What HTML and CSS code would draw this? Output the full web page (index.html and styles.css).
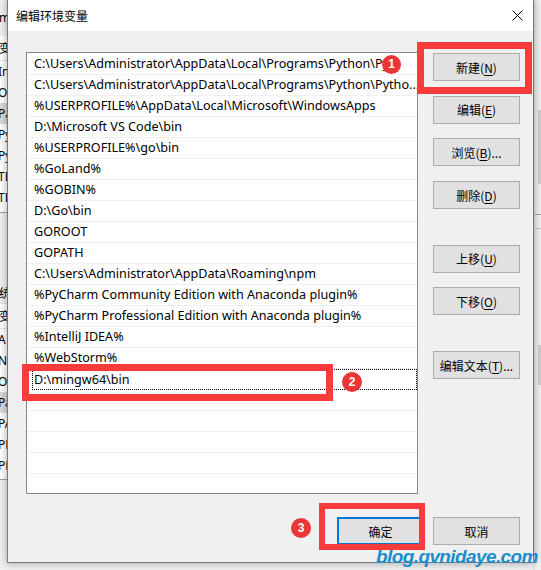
FILE: index.html
```html
<!DOCTYPE html>
<html lang="zh-CN">
<head>
<meta charset="utf-8">
<title>编辑环境变量</title>
<link rel="stylesheet" href="styles.css">
</head>
<body>
<div class="desktop">
  <div class="backwin">
    <div class="bw-title">m</div>
    <div class="bw-head">变</div>
    <div class="bw-list">
      <div class="bw-row">In</div>
      <div class="bw-row">On</div>
      <div class="bw-row sel">Pa</div>
      <div class="bw-row">Py</div>
      <div class="bw-row">Py</div>
      <div class="bw-row">TE</div>
      <div class="bw-row">TM</div>
    </div>
    <div class="bw-gap"></div>
    <div class="bw-group">统</div>
    <div class="bw-head2">变</div>
    <div class="bw-list2">
      <div class="bw-row">A</div>
      <div class="bw-row">NU</div>
      <div class="bw-row">OS</div>
      <div class="bw-row sel">Pa</div>
      <div class="bw-row">PA</div>
      <div class="bw-row">PR</div>
      <div class="bw-row">PR</div>
    </div>
  </div>

  <div class="backright">
    <div class="br-thumb"></div>
    <div class="br-line l1"></div>
    <div class="br-line l2"></div>
    <div class="br-thumb t2"></div>
  </div>

  <div class="dialog">
    <div class="titlebar">
      <span class="title">编辑环境变量</span>
      <svg class="close" width="11" height="11" viewBox="0 0 11 11"><path d="M0.5 0.5 L10.5 10.5 M10.5 0.5 L0.5 10.5" stroke="#000" stroke-width="1" fill="none"/></svg>
    </div>
    <div class="body">
      <div class="main">
        <div class="list">
          <div class="row">C:\Users\Administrator\AppData\Local\Programs\Python\Py...</div>
          <div class="row">C:\Users\Administrator\AppData\Local\Programs\Python\Pytho...</div>
          <div class="row">%USERPROFILE%\AppData\Local\Microsoft\WindowsApps</div>
          <div class="row">D:\Microsoft VS Code\bin</div>
          <div class="row">%USERPROFILE%\go\bin</div>
          <div class="row">%GoLand%</div>
          <div class="row">%GOBIN%</div>
          <div class="row">D:\Go\bin</div>
          <div class="row">GOROOT</div>
          <div class="row">GOPATH</div>
          <div class="row">C:\Users\Administrator\AppData\Roaming\npm</div>
          <div class="row">%PyCharm Community Edition with Anaconda plugin%</div>
          <div class="row">%PyCharm Professional Edition with Anaconda plugin%</div>
          <div class="row">%IntelliJ IDEA%</div>
          <div class="row">%WebStorm%</div>
          <div class="row focus">D:\mingw64\bin</div>
          <div class="row"></div>
          <div class="row"></div>
          <div class="row"></div>
          <div class="row"></div>
          <div class="row"></div>
        </div>
        <div class="side">
          <div class="btn">新建(<u>N</u>)</div>
          <div class="btn">编辑(<u>E</u>)</div>
          <div class="btn">浏览(<u>B</u>)...</div>
          <div class="btn">删除(<u>D</u>)</div>
          <div class="btn group">上移(<u>U</u>)</div>
          <div class="btn">下移(<u>O</u>)</div>
          <div class="btn group">编辑文本(<u>T</u>)...</div>
        </div>
      </div>
      <div class="footer">
        <div class="btn default">确定</div>
        <div class="btn">取消</div>
      </div>
    </div>
  </div>

  <div class="mark box1"></div>
  <div class="mark box2"></div>
  <div class="mark box3"></div>
  <div class="badge b1">1</div>
  <div class="badge b2">2</div>
  <div class="badge b3">3</div>
  <div class="watermark">blog.qvnidaye.com</div>
</div>
</body>
</html>
```
FILE: styles.css
```css
html, body {
  margin: 0;
  padding: 0;
}
body {
  width: 541px;
  height: 570px;
  overflow: hidden;
  background: #f0f0f0;
  font-family: "Noto Sans", "Noto Sans CJK SC", sans-serif;
}
.desktop {
  position: relative;
  width: 541px;
  height: 570px;
  overflow: hidden;
  background: #f0f0f0;
}

/* background window on the left */
.backwin {
  position: absolute;
  left: 0;
  top: 0;
  width: 8px;
  height: 570px;
  overflow: hidden;
  background: #f0f0f0;
  font-size: 12px;
  color: #000;
  white-space: nowrap;
}
.backwin > div, .bw-list > div, .bw-list2 > div {
  padding-left: 0;
  margin-left: -1px;
}
.bw-title { height: 36px; line-height: 36px; background: #f0f0f0; }
.bw-head { height: 24px; line-height: 24px; font-family: "Noto Sans CJK SC", sans-serif; border-bottom: 1px solid #e5e5e5; background: #fff; }
.bw-list { background: #fff; border-bottom: 1px solid #a0a0a0; height: 151px; }
.bw-row { height: 21px; line-height: 21px; }
.bw-row.sel { background: #d9d9d9; }
.bw-gap { height: 70px; }
.bw-group { height: 20px; line-height: 20px; font-family: "Noto Sans CJK SC", sans-serif; border-bottom: 1px solid #e5e5e5; }
.bw-head2 { height: 24px; line-height: 24px; font-family: "Noto Sans CJK SC", sans-serif; background: #fff; border-bottom: 1px solid #e5e5e5; }
.bw-list2 { background: #fff; border-bottom: 1px solid #a0a0a0; height: 150px; }

/* background window on the right */
.backright {
  position: absolute;
  left: 533px;
  top: 0;
  width: 8px;
  height: 570px;
  background: #f0f0f0;
  border-left: 2px solid #e3e3e3;
  box-sizing: border-box;
}
.br-thumb {
  position: absolute;
  left: 3px;
  top: 110px;
  width: 5px;
  height: 74px;
  background: #cdcdcd;
}
.br-thumb.t2 { top: 345px; height: 40px; }
.br-line {
  position: absolute;
  left: 0;
  width: 8px;
  height: 1px;
  background: #a0a0a0;
}
.br-line.l1 { top: 214px; }
.br-line.l2 { top: 228px; background: #c8c8c8; }

/* dialog window */
.dialog {
  position: absolute;
  left: 7px;
  top: -1px;
  width: 527px;
  height: 564px;
  box-sizing: border-box;
  border: 1px solid #7a7a7a;
  background: #f0f0f0;
  box-shadow: 0 0 8px rgba(0, 0, 0, 0.35);
  display: flex;
  flex-direction: column;
}
.titlebar {
  height: 31px;
  background: #fff;
  display: flex;
  align-items: center;
  justify-content: space-between;
  padding: 0 10px 0 8px;
  flex: none;
}
.title {
  font-family: "Noto Sans CJK SC", sans-serif;
  font-size: 12px;
  color: #000;
  line-height: 1;
  margin-top: 1px;
}
.close { display: block; margin-top: 0; }

.body {
  flex: 1;
  display: flex;
  flex-direction: column;
  padding: 21px 13px 0 18px;
}
.main {
  display: flex;
  gap: 15px;
  align-items: flex-start;
}
.list {
  width: 392px;
  height: 442px;
  box-sizing: border-box;
  border: 1px solid #828790;
  background: #fff;
  padding-top: 1px;
  overflow: hidden;
  flex: none;
}
.row {
  height: 21px;
  box-sizing: border-box;
  border-bottom: 1px solid #f0f0f0;
  padding-left: 7px;
  font-family: "Noto Sans", sans-serif;
  font-size: 12.6px;
  line-height: 20px;
  color: #000;
  white-space: nowrap;
  overflow: hidden;
}
.row.focus {
  margin-left: 5px;
  border: 1px dotted #000;
  padding-left: 1px;
  line-height: 19px;
}

.side {
  display: flex;
  flex-direction: column;
  gap: 14.7px;
  padding-top: 1px;
}
.btn {
  width: 87px;
  height: 28px;
  box-sizing: border-box;
  border: 1px solid #adadad;
  background: #e1e1e1;
  font-family: "Noto Sans CJK SC", sans-serif;
  font-size: 12px;
  color: #000;
  display: flex;
  align-items: center;
  justify-content: center;
  flex: none;
}
.btn u { text-decoration-thickness: 1px; text-underline-offset: 2px; }
.btn.group { margin-top: 21px; }
.btn.default { border: 2px solid #0078d7; }

.footer {
  display: flex;
  justify-content: flex-end;
  gap: 9px;
  margin-top: 23px;
}

/* annotations */
.mark {
  position: absolute;
  box-sizing: border-box;
  border: 7px solid #fa3b3b;
}
.box1 { left: 417px; top: 42px; width: 115px; height: 52px; }
.box2 { left: 22px; top: 364px; width: 311px; height: 37px; }
.box3 { left: 319px; top: 503px; width: 106px; height: 47px; border-width: 6px; }
.badge {
  position: absolute;
  width: 20px;
  height: 20px;
  border-radius: 50%;
  background: #ec3535;
  color: #fff;
  font-family: "Liberation Sans", Arial, sans-serif;
  font-weight: bold;
  font-size: 12px;
  line-height: 20px;
  text-align: center;
}
.b1 { left: 382px; top: 55px; width: 19px; height: 19px; line-height: 19px; }
.b2 { left: 342px; top: 372px; }
.b3 { left: 291px; top: 518px; }
.watermark {
  position: absolute;
  left: 376px;
  top: 545px;
  font-family: "Liberation Sans", Arial, sans-serif;
  font-style: italic;
  font-weight: bold;
  font-size: 19px;
  letter-spacing: -0.6px;
  color: #1a8dcc;
  line-height: 24px;
  white-space: nowrap;
}
```
